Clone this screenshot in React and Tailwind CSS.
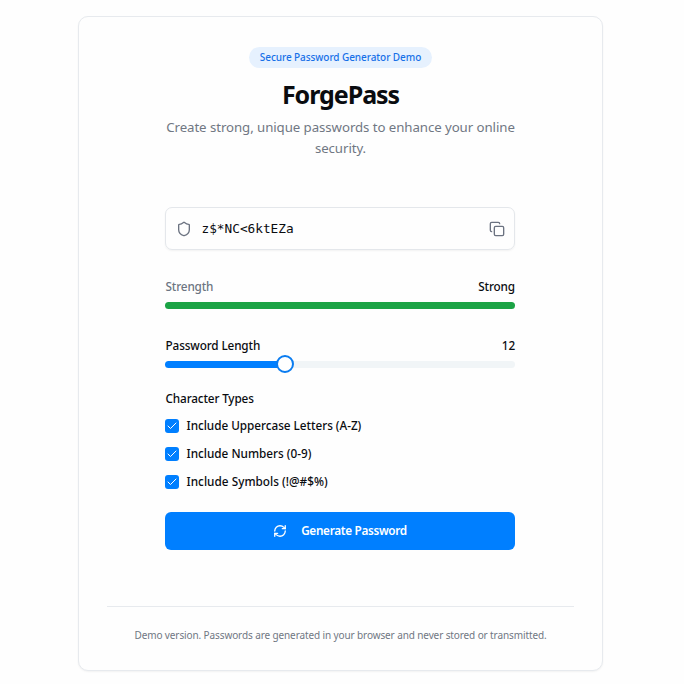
import { Shield, Copy, RefreshCw, Check } from "lucide-react";

const options = [
  { label: "Include Uppercase Letters (A-Z)", tracking: "tracking-[-0.03px]" },
  { label: "Include Numbers (0-9)", tracking: "tracking-[0px]" },
  { label: "Include Symbols (!@#$%)", tracking: "tracking-[0.03px]" },
];

export default function App() {
  return (
    <div className="flex h-[684px] w-[684px] flex-col items-start overflow-hidden bg-[#fefefe] pl-[78px] pt-[16px] font-['Noto_Sans',sans-serif] text-[#0a0c10]">
      <main className="flex h-[655px] w-[525px] flex-col rounded-[10px] border border-[#e7eaee] bg-[#fefefe] px-[28px] shadow-xs">
        <header className="flex flex-col items-center pt-[30px] text-center">
          <div className="flex h-[21px] w-[183px] items-center justify-center whitespace-nowrap rounded-full bg-[#e6f1fe] text-[10px] font-medium tracking-[-0.07px] text-[#1670e8]">Secure Password Generator Demo</div>
          <h1 className="mt-[10px] text-[25px] font-bold leading-[32px] tracking-[-1.05px]">ForgePass</h1>
          <p className="mt-[7px] w-[360px] text-[13.25px] leading-[21px] tracking-[-0.07px] text-[#707783]">Create strong, unique passwords to enhance your online security.</p>
        </header>
        <section className="ml-[58px] mt-[48px] flex w-[350px] flex-col text-[11.75px] font-medium">
          <div className="flex h-[43px] items-center rounded-[7px] border border-[#e4e7eb] pl-[9.5px] pr-[9px] shadow-xs">
            <Shield size={16} strokeWidth={2} className="text-[#6b7280]" />
            <span className="ml-[10px] font-['DejaVu_Sans_Mono',monospace] text-[12.75px] font-normal">z$*NC&lt;6ktEZa</span>
            <Copy size={16} strokeWidth={2} className="ml-auto text-[#6b7280]" />
          </div>
          <div className="mt-[28px] flex h-[18px] items-center justify-between pl-[0.5px] tracking-[-0.14px]"><span className="text-[#6c7581]">Strength</span><span>Strong</span></div>
          <div className="mt-[6px] h-[7px] rounded-full bg-[#1ba345]" />
          <div className="mt-[28px] flex h-[18px] items-center justify-between pl-[0.5px] tracking-[-0.13px]"><span>Password Length</span><span>12</span></div>
          <div className="flex h-[18px] items-center">
            <div className="h-[7px] w-[112px] rounded-l-full bg-[#007fff]" />
            <div className="z-10 -ml-px size-[18px] rounded-full border-2 border-[#0a7cf0] bg-white" />
            <div className="-ml-[2px] h-[7px] flex-1 rounded-r-full bg-[#f1f5f7]" />
          </div>
          <div className="mt-[16px] h-[18px] pl-[0.5px] leading-[18px] tracking-[-0.14px]">Character Types</div>
          <div className="mt-[10px] flex flex-col gap-[10px]">
            {options.map((o) => (
              <div key={o.label} className="flex h-[18px] items-center gap-[7.5px]">
                <span className="flex size-[14px] items-center justify-center rounded-[3px] bg-[#007fff] text-white"><Check size={12} strokeWidth={2} /></span>
                <span className={o.tracking}>{o.label}</span>
              </div>
            ))}
          </div>
          <button className="mt-[21px] flex h-[38px] items-center justify-center rounded-[6px] bg-[#007fff] font-semibold tracking-[-0.32px] text-white">
            <RefreshCw size={14} strokeWidth={2.25} className="mr-[14px]" />Generate Password
          </button>
        </section>
        <footer className="mt-[56px] border-t border-[#e7eaee] pt-[19px] text-center text-[10px] leading-[18px] tracking-[-0.11px] text-[#707783]">Demo version. Passwords are generated in your browser and never stored or transmitted.</footer>
      </main>
    </div>
  );
}
